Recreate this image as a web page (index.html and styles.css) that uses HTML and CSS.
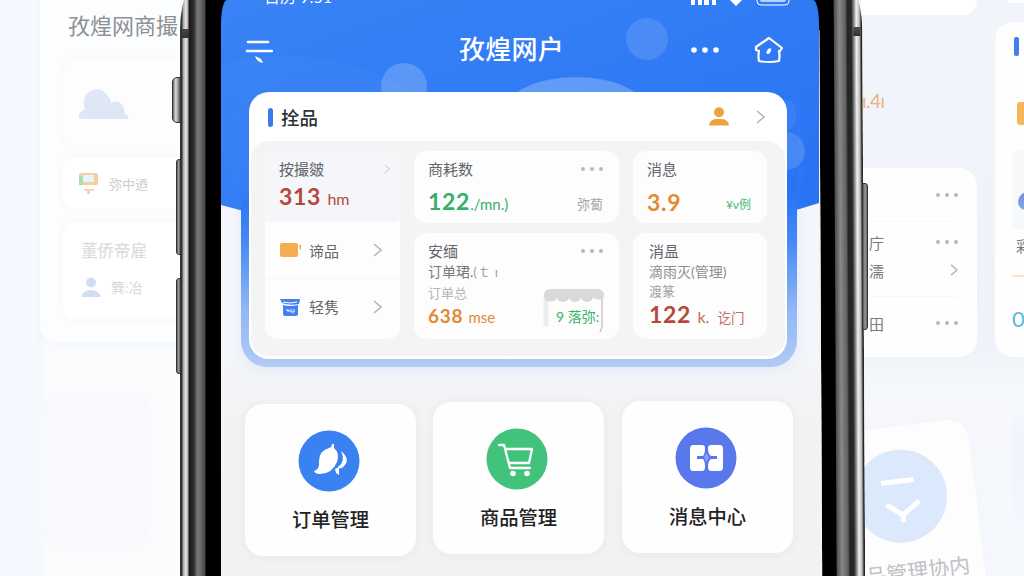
FILE: index.html
```
<!DOCTYPE html>
<html lang="zh-CN">

<head>
    <meta charset="UTF-8">
    <meta name="viewport" content="width=device-width, initial-scale=1.0">
    <title>孜煌网户</title>
    <link rel="stylesheet" href="styles.css">
</head>

<body>
    <div class="scene">
        <!-- 左侧背景 -->
        <div class="side-left">
            <div class="ghost-panel">
                <h2 class="ghost-title">孜煌网商撮</h2>
                <div class="ghost-card cloud-card">
                    <svg width="52" height="32" viewBox="0 0 52 32"><path d="M2 31Q-2 26 7 21Q3 9 12 3Q23-2 29 7Q33 11 33 15Q40 11 45 18Q47 22 46 25Q50 27 51 31Z" fill="#dfe7f5"/></svg>
                </div>
                <div class="ghost-card ghost-row">
                    <svg width="22" height="22" viewBox="0 0 22 22"><rect x="1" y="1" width="19" height="12" rx="2" fill="#f6cfa0"/><rect x="1" y="4" width="4" height="9" fill="#a8dfae"/><rect x="5" y="3" width="11" height="7" fill="#e4f5fb"/><path d="M6 17h10v2h-4v3H9v-3H6z" fill="#f3d1b4"/></svg>
                    <span>弥中迺</span>
                </div>
                <div class="ghost-card ghost-user">
                    <p>董侨帝雇</p>
                    <div class="ghost-row">
                        <svg width="20" height="20" viewBox="0 0 20 20" fill="#cfdef6"><circle cx="10" cy="5.500" r="5"/><path d="M0 20Q2 13 10 13T20 20Z"/></svg>
                        <span>簨:冶</span>
                    </div>
                </div>
            </div>
            <div class="ghost-block"></div>
        </div>

        <!-- 手机 -->
        <div class="phone">
            <div class="rail rail-left"></div>
            <div class="screen">
                <svg class="hero" width="598" height="214" viewBox="0 0 598 214">
                    <defs>
                        <linearGradient id="heroFill" x1="0" y1="0" x2="1" y2="1">
                            <stop offset="0" stop-color="#3983f6"/>
                            <stop offset="1" stop-color="#2872f4"/>
                        </linearGradient>
                    </defs>
                    <path d="M0 0H598V203L562 214H34L0 205Z" fill="url(#heroFill)"/>
                    <path d="M0 64Q90 40 180 86V214H0Z" fill="#fff" opacity=".025"/>
                    <circle cx="183" cy="86" r="23" fill="#fff" opacity=".2"/>
                    <circle cx="426" cy="39" r="21" fill="#fff" opacity=".12"/>
                    <ellipse cx="355" cy="113" rx="72" ry="36" fill="#fff" opacity=".24"/>
                    <rect x="540" y="100" width="35" height="30" rx="9" fill="#fff" opacity=".06"/>
                    <circle cx="565" cy="151" r="19" fill="#fff" opacity=".14"/>
                </svg>
                <div class="status-bar">
                    <span>日历 9:51</span>
                    <svg width="102" height="18" viewBox="0 0 102 18" fill="#fff"><path d="M2 10h4v7H2zm7-2h4v9H9zm6-3h5v12h-5zm8-3h4v15h-4zM40 11Q47 5 54 11L47 18Z"/><rect x="68" y="3" width="32" height="14" rx="4" fill="none" stroke="#fff"/><rect x="71" y="6" width="26" height="8" rx="2" opacity=".65"/></svg>
                </div>
                <div class="nav-bar">
                    <svg width="28" height="26" viewBox="0 0 28 26"><path d="M3 3h20M2 12h25" stroke="#fff" stroke-width="2.500" stroke-linecap="round"/><path d="M10 17L16 20L18 24Q12 23 10 17Z" fill="#fff"/></svg>
                    <h1>孜煌网户</h1>
                    <div class="nav-actions">
                        <svg width="28" height="8" viewBox="0 0 28 8" fill="#fff"><circle cx="3" cy="4" r="2.800"/><circle cx="14" cy="4" r="2.800"/><circle cx="25" cy="4" r="2.800"/></svg>
                        <svg width="30" height="28" viewBox="0 0 30 28" fill="none" stroke="#fff" stroke-width="2.200" stroke-linejoin="round"><path d="M15 2L28 12L26 15H25Q26 20 25 25Q15 27 5 25Q4 20 5 15L2 14V11Z"/><path d="M14 13Q18 11 17 15Q15 20 12 17Z" fill="#fff" stroke="none"/></svg>
                    </div>
                </div>

                <section class="summary">
                    <div class="summary-inner">
                        <header class="summary-head">
                            <i class="bar"></i>
                            <h2>拴品</h2>
                            <svg class="user" width="20" height="20" viewBox="0 0 20 20" fill="#f0a13f"><circle cx="10" cy="5.300" r="5"/><path d="M0 18.500Q1 12 7 12H13Q19 12 20 18.500Z"/></svg>
                            <svg class="arrow" width="9" height="14" viewBox="0 0 9 14"><path d="M1 1L8 7L1 13"/></svg>
                        </header>
                        <div class="summary-grid">
                            <div class="menu-card">
                                <div class="menu-top">
                                    <div class="line">
                                        <span class="label">按撮皴</span>
                                        <svg class="arrow faint" width="6" height="10" viewBox="0 0 9 14"><path d="M1 1L8 7L1 13"/></svg>
                                    </div>
                                    <p class="num red">313 <small>hm</small></p>
                                </div>
                                <div class="menu-item">
                                    <svg width="22" height="16" viewBox="0 0 22 16" fill="#f4ad50"><rect x="0" y="1" width="18" height="14" rx="2"/><path d="M19 3h2v5h-1z"/></svg>
                                    <span>谛品</span>
                                    <svg class="arrow" width="9" height="14" viewBox="0 0 9 14"><path d="M1 1L8 7L1 13"/></svg>
                                </div>
                                <div class="menu-item">
                                    <svg width="22" height="18" viewBox="0 0 22 18" fill="#4480ef"><path d="M0 1H20L19 6Q10 8 2 5Z"/><path d="M3 7Q10 9 18 7V16Q18 18 16 18H5Q3 18 3 16Z"/><path d="M3 4Q10 6 17 4M7 11v2l2-1v2m2-3v3h3v-3" fill="none" stroke="#fff" stroke-width="1"/></svg>
                                    <span>轻隽</span>
                                    <svg class="arrow" width="9" height="14" viewBox="0 0 9 14"><path d="M1 1L8 7L1 13"/></svg>
                                </div>
                            </div>
                            <div class="stat-card">
                                <div class="line">
                                    <span class="label">商耗数</span>
                                    <span class="dots"><i></i><i></i><i></i></span>
                                </div>
                                <div class="line value-line">
                                    <p class="num green">122<small>./mn.)</small></p>
                                    <span class="tag">弥蔔</span>
                                </div>
                            </div>
                            <div class="stat-card">
                                <div class="line"><span class="label">消息</span></div>
                                <div class="line value-line">
                                    <p class="num orange">3.9</p>
                                    <span class="tag green">¥ν例</span>
                                </div>
                            </div>
                            <div class="stat-card order-card">
                                <div class="line">
                                    <span class="label">安缅</span>
                                    <span class="dots"><i></i><i></i><i></i></span>
                                </div>
                                <p class="sub">订单珺.<em>(ｔ ı</em></p>
                                <p class="hint">订单总</p>
                                <p class="num orange small">638 <small>mse</small></p>
                                <div class="shop">
                                    <svg width="62" height="46" viewBox="0 0 62 46"><path d="M3 9V38" stroke="#eeeeef" stroke-width="5"/><path d="M59 9V39l-2 5" fill="none" stroke="#c9c5d2" stroke-width="1.500"/><path d="M1 6Q2 1 8 1H54Q60 1 61 6V8A6 5 0 0 1 50 9A6 5 0 0 1 38 9A6 5 0 0 1 26 9A6 5 0 0 1 14 9A6.500 5 0 0 1 1 8Z" fill="#d8d9db"/></svg>
                                    <span>9 落弥:</span>
                                </div>
                            </div>
                            <div class="stat-card message-card">
                                <div class="line"><span class="label">消昷</span></div>
                                <p class="sub">滴雨灭(管理)</p>
                                <p class="hint">渡篆</p>
                                <p class="num red">122 <small>k. <b>讫门</b></small></p>
                            </div>
                        </div>
                    </div>
                </section>

                <nav class="tiles">
                    <a class="tile">
                        <svg width="62" height="62" viewBox="0 0 62 62"><circle cx="31" cy="31" r="30.500" fill="#3a82f2"/><path d="M16 41Q22 39 21 31Q21 21 31 18Q34 17 34 14L36 14L36 18Q42 23 39 32Q34 44 22 44Q17 44 16 41Z" fill="#fff"/><path d="M43 21Q54 30 44 38Q41 39 40 37Q48 31 43 21ZM37 39L41 37L41 45L38 43Z" fill="#fff"/></svg>
                        <span>订单管理</span>
                    </a>
                    <a class="tile">
                        <svg width="62" height="62" viewBox="0 0 62 62"><circle cx="31" cy="31" r="30.500" fill="#42c37c"/><path d="M13 17H18L24 40H44M20 21H46L43 35H23" fill="none" stroke="#fff" stroke-width="2.300" stroke-linecap="round" stroke-linejoin="round"/><circle cx="27" cy="45.500" r="2.800" fill="#fff"/><circle cx="41" cy="45.500" r="2.800" fill="#fff"/></svg>
                        <span>商品管理</span>
                    </a>
                    <a class="tile">
                        <svg width="62" height="62" viewBox="0 0 62 62"><circle cx="31" cy="31" r="30.500" fill="#5878ec"/><path d="M18 18H27Q30 18 30 21Q30 27 28 29H22V32H28Q30 34 30 40Q30 44 27 44H18Q15 44 15 40V22Q15 18 18 18Z" fill="#fff"/><path d="M36 18H45Q48 18 48 22V40Q48 44 45 44H36Q33 44 33 40Q33 34 36 32H42V29H36Q33 27 33 21Q33 18 36 18Z" fill="#fff"/><path d="M31.500 26L34 30.500L31.500 35L29 30.500Z" fill="#88a2fb"/></svg>
                        <span>消息中心</span>
                    </a>
                </nav>
            </div>
            <div class="rail rail-right"></div>
            <i class="key key-mute"></i>
            <i class="key key-up"></i>
            <i class="key key-down"></i>
            <i class="key key-power"></i>
        </div>

        <!-- 右侧背景 -->
        <div class="side-right">
            <div class="right-col">
                <div class="right-top"></div>
                <div class="right-number">ı.4ı</div>
                <div class="right-list">
                    <div class="right-item"><span></span><span class="dots"><i></i><i></i><i></i></span></div>
                    <div class="right-item tall">
                        <div class="line"><span>庁</span><span class="dots"><i></i><i></i><i></i></span></div>
                        <div class="line"><span>濡</span><svg class="arrow" width="8" height="12" viewBox="0 0 9 14"><path d="M1 1L8 7L1 13"/></svg></div>
                    </div>
                    <div class="right-item"><span>田</span><span class="dots"><i></i><i></i><i></i></span></div>
                </div>
                <div class="tilted">
                    <svg width="94" height="94" viewBox="0 0 94 94"><circle cx="47" cy="47" r="46.500" fill="#dce8fb"/><path d="M29 32H62M32 54L47 66L65 54M47 66V73" fill="none" stroke="#fff" stroke-width="5"/></svg>
                    <span>品管理协内</span>
                </div>
            </div>
            <div class="edge-col">
                <div class="edge-cap"></div>
                <div class="edge-card">
                    <i class="edge-bar"></i>
                    <i class="edge-box"></i>
                    <div class="edge-inner"><i></i></div>
                    <span>彩</span>
                    <i class="edge-line"></i>
                    <b>0</b>
                </div>
                <div class="edge-foot"></div>
            </div>
        </div>
    </div>
</body>

</html>
```
FILE: styles.css
```
* {
    box-sizing: border-box;
}

body {
    margin: 0;
    font-family: Lato, "Noto Sans CJK SC", sans-serif;
    background-color: #f7f9fc;
    overflow: hidden;
}

h1,
h2,
p {
    margin: 0;
    font-weight: normal;
}

svg {
    display: block;
    flex: none;
}

.scene {
    display: grid;
    grid-template-columns: 180px 682px 162px;
    width: 1024px;
    height: 576px;
    overflow: hidden;
}

.line {
    display: flex;
    justify-content: space-between;
    align-items: center;
}

.arrow {
    fill: none;
    stroke: #b2b5ba;
    stroke-width: 1.6;
}

.faint {
    stroke: #d5d7dc;
}

.dots {
    display: flex;
    gap: 5px;
}

.dots i {
    width: 4px;
    height: 4px;
    border-radius: 50%;
    background-color: #b6b8bc;
}

.red {
    color: #b7483a;
}

.green {
    color: #36af68;
}

.orange {
    color: #e28a34;
}

/* 左侧背景 */
.side-left {
    padding-left: 40px;
    background: linear-gradient(90deg, #f5f9ff 0, #f6f9fe 34px, #f4f7fb 38px, #f9fbfd 46px);
    overflow: hidden;
}

.ghost-panel {
    height: 342px;
    padding: 10px 0 0 23px;
    border-radius: 0 0 0 16px;
    background-color: #fcfdfe;
    box-shadow: 0 3px 8px #f4f6f9;
}

.ghost-title {
    width: 150px;
    margin-left: 5px;
    font-size: 22px;
    line-height: 32px;
    color: #8d9095;
}

.ghost-card {
    border-radius: 12px 0 0 12px;
    background-color: #fff;
    box-shadow: 0 0 7px #f4f6f9;
}

.cloud-card {
    height: 87px;
    margin-top: 16px;
    padding: 30px 0 0 15px;
    background-color: #fdfdfe;
}

.ghost-row {
    display: flex;
    align-items: center;
    gap: 10px;
    font-size: 13px;
    color: #c9cbcf;
}

.ghost-card.ghost-row {
    height: 52px;
    margin-top: 12px;
    padding-left: 15px;
    gap: 9px;
}

.ghost-user {
    height: 97px;
    margin-top: 13px;
    padding: 18px 0 0 18px;
}

.ghost-user p {
    font-size: 16.5px;
    font-weight: 500;
    line-height: 22px;
    color: #dcdddf;
}

.ghost-user .ghost-row {
    margin-top: 15px;
    font-size: 14px;
    color: #d5d7da;
}

.ghost-block {
    height: 152px;
    margin: 51px 30px 0 0;
    border-radius: 18px;
    background-color: #f7f9fc;
}

/* 手机 */
.phone {
    position: relative;
    z-index: 2;
    display: flex;
    height: 606px;
    margin-top: -30px;
}

.rail {
    flex: none;
    height: 606px;
}

.rail-left {
    width: 41px;
    border-radius: 30px 0 0 0 / 60px 0 0 0;
    background: linear-gradient(180deg, transparent 59px, #474747 59px, #303030 68px, transparent 68px) 2px 0 / 7px 100% no-repeat, linear-gradient(90deg, #343434 0, #343434 2px, #a0a0a0 3px, #e8e8e8 6px, #aaa 8px, #171717 9px, #33312f 14px, #444 15px, #777 17px, #6d6d6d 20px, #454545 25px, #000 26px, #000 41px);
}

.rail-right {
    width: 43px;
    border-radius: 0 30px 0 0 / 0 60px 0 0;
    background: linear-gradient(180deg, transparent 57px, #505050 57px, #303030 66px, transparent 66px) 34px 0 / 7px 100% no-repeat, linear-gradient(90deg, #000 0, #000 14px, #4f4f4f 15px, #888 20px, #606060 26px, #242424 28px, #282828 32px, #737373 34px, #f0f0f0 37px, #bcbcbc 40px, #242424 42px, #2d2d2d 43px);
    transform: skewX(.3deg);
    transform-origin: top;
}

.screen {
    position: relative;
    width: 598px;
    padding-top: 30px;
    background: linear-gradient(180deg, #f4f6fb 380px, #f3f3f4 440px, #f2f2f3);
    box-shadow: 3px 0 #f3f3f4;
}

.screen::before {
    content: "";
    position: absolute;
    inset: 0 -4px auto 0;
    height: 60px;
    background-color: #000;
}

.rail-right {
    position: relative;
}

.hero {
    position: absolute;
    left: 0;
    top: 30px;
    border-radius: 6px 6px 0 0 / 24px 24px 0 0;
}

/* 状态栏被屏幕上缘截断 */
.status-bar {
    position: relative;
    display: flex;
    justify-content: space-between;
    height: 18px;
    margin: -12px 28px 0 43px;
    font-size: 16px;
    line-height: 18px;
    color: #fff;
}

.nav-bar {
    position: relative;
    display: grid;
    grid-template-columns: 120px 1fr 120px;
    align-items: center;
    height: 48px;
    margin: 20px 35px 0 24px;
}

.nav-bar > svg {
    margin-top: 3px;
}

.nav-bar h1 {
    margin-left: -6px;
    margin-top: -2px;
    font-size: 26px;
    font-weight: 500;
    line-height: 44px;
    text-align: center;
    letter-spacing: .3px;
    color: #fff;
}

.nav-actions {
    display: flex;
    justify-content: flex-end;
    align-items: center;
    gap: 35px;
}

.summary {
    position: relative;
    width: 556px;
    height: 283px;
    margin: 10px 0 0 20px;
    padding: 8px 10px 8px 8px;
    border-radius: 26px;
    background: linear-gradient(180deg, transparent 38%, #2f7af4 43%, #4488f5 55%, #91b7f6 80%, #b2cbf3 100%);
    box-shadow: 0 4px 14px rgba(120, 165, 235, .13);
}

.summary-inner {
    height: 267px;
    border-radius: 20px;
    background-color: #fff;
    overflow: hidden;
}

.summary-head {
    display: flex;
    align-items: center;
    height: 49px;
    padding: 1px 22px 0 19px;
}

.bar {
    width: 5px;
    height: 19px;
    border-radius: 3px;
    background-color: #397bec;
}

.summary-head h2 {
    margin: 0 auto 0 8px;
    font-size: 18.5px;
    font-weight: 500;
    color: #303236;
}

.summary-head .user {
    margin-right: 27px;
}

.summary-grid {
    display: grid;
    grid-template-columns: 135px 205px 134px;
    grid-template-rows: 72px 106px;
    gap: 10px 14px;
    height: 215px;
    margin: 0 2px;
    padding: 10px 17px 0 14px;
    border-radius: 18px;
    background-color: #f4f4f5;
}

.menu-card {
    grid-row: span 2;
    border-radius: 12px;
    background-color: #fdfdfd;
    overflow: hidden;
}

.menu-top {
    height: 71px;
    padding: 7px 10px 0 14px;
    border-radius: 12px 12px 5px 5px;
    background-color: #f4f6f9;
}

.label {
    font-size: 15px;
    line-height: 22px;
    color: #62656b;
}

.num {
    font-size: 23px;
    font-weight: bold;
    line-height: 32px;
    letter-spacing: .7px;
    white-space: nowrap;
}

.num small {
    font-size: 16px;
    font-weight: normal;
    letter-spacing: 0;
}

.menu-item {
    display: flex;
    align-items: center;
    height: 56px;
    padding: 0 18px 0 15px;
    font-size: 15px;
    color: #64676c;
}

.menu-item + .menu-item {
    border-top: 1px solid #f7f7f7;
}

.menu-item span {
    margin: 0 auto 0 7px;
}

.stat-card {
    padding: 7px 16px 0 14px;
    border-radius: 13px;
    background-color: #fdfdfd;
}

.value-line {
    height: 42px;
}

.value-line .num {
    font-size: 23px;
    padding-top: 2px;
}

.value-line small {
    font-size: 15px;
}

.tag {
    padding-top: 4px;
    font-size: 13px;
    color: #a0a2a5;
}

.tag.green {
    font-size: 12px;
    color: #43b96f;
}

.sub {
    font-size: 14px;
    line-height: 20px;
    white-space: nowrap;
    color: #75787d;
}

.sub em {
    font-style: normal;
    color: #a4a6aa;
}

.hint {
    font-size: 13px;
    line-height: 22px;
    color: #b5b7ba;
}

.order-card {
    position: relative;
}

.order-card .num {
    font-size: 19px;
    line-height: 24px;
}

.order-card .num small {
    font-size: 15px;
}

/* 店铺小图叠在卡片右下角 */
.shop {
    position: absolute;
    right: 14px;
    bottom: 5px;
    display: grid;
}

.shop svg,
.shop span {
    grid-area: 1 / 1;
}

.shop span {
    padding: 17px 0 0 13px;
    font-size: 14px;
    line-height: 24px;
    white-space: nowrap;
    color: #36b568;
}

.message-card {
    padding-left: 16px;
    padding-right: 0;
}

.message-card .sub {
    color: #8c8f94;
}

.message-card .hint {
    line-height: 18px;
    color: #9d9fa3;
}

.message-card .num {
    line-height: 28px;
}

.message-card small {
    font-size: 16px;
    color: #c56b48;
}

.message-card b {
    margin-left: 4px;
    font-size: 13.5px;
    font-weight: normal;
    color: #c86b62;
}

.tiles {
    display: flex;
    gap: 18px;
    margin: 34px 0 0 24px;
}

.tile {
    display: flex;
    flex-direction: column;
    align-items: center;
    width: 171px;
    height: 152px;
    margin-top: 3px;
    padding-top: 26px;
    border-radius: 18px;
    background-color: #fefefe;
    box-shadow: 0 1px 10px rgba(60, 60, 70, .055);
    font-size: 19.3px;
    font-weight: 500;
    line-height: 28px;
    color: #222;
}

.tile svg {
    margin-right: 4px;
}

.tile:nth-child(2) {
    margin-top: 1px;
    margin-left: -1px;
}

.tile:nth-child(3) {
    margin-top: 0;
}

.tile span {
    margin-top: 14px;
}

/* 机身侧键 */
.key {
    position: absolute;
    width: 5px;
    border: 1px solid #333;
    border-radius: 3px 0 0 3px;
    background: linear-gradient(90deg, #555, #999, #666);
}

.key-mute {
    left: -8px;
    top: 107px;
    width: 9px;
    height: 46px;
    border-radius: 5px 0 0 5px;
    background: linear-gradient(90deg, #666, #ddd 40%, #555);
}

.key-up {
    left: -4px;
    top: 189px;
    height: 96px;
}

.key-down {
    left: -4px;
    top: 308px;
    height: 96px;
}

.key-power {
    left: 682px;
    top: 213px;
    width: 6px;
    height: 147px;
    border-radius: 0 3px 3px 0;
}

/* 右侧背景 */
.side-right {
    display: grid;
    grid-template-columns: 115px 29px;
    justify-content: space-between;
    height: 576px;
    background: linear-gradient(180deg, #f1f5fb 0, #eff3f9 350px, #f6f8fc 390px, #f5f8fd 100%);
}

.right-top {
    height: 15px;
    border-radius: 0 0 14px 0;
    background-color: #fff;
}

.right-number {
    height: 153px;
    padding: 74px 0 0 0;
    font-size: 19px;
    line-height: 24px;
    letter-spacing: -.5px;
    color: #efb27a;
}

.right-list {
    height: 189px;
    padding: 0 19px 0 7px;
    border-radius: 0 18px 18px 0;
    background-color: #fefefe;
    font-size: 15px;
    color: #777a7f;
}

.right-item {
    display: flex;
    justify-content: space-between;
    align-items: center;
    height: 54px;
    border-bottom: 1px solid #f8f8f9;
}

.right-item:last-child {
    height: 52px;
    border: 0;
}

.right-item.tall {
    display: block;
    height: 75px;
    padding-top: 6px;
}

.tall .line {
    height: 28px;
}

.tilted {
    display: flex;
    flex-direction: column;
    align-items: center;
    width: 150px;
    height: 180px;
    margin: 69px 0 0 -34px;
    padding: 23px 0 0 0;
    border-radius: 20px;
    background-color: #fdfdfe;
    box-shadow: 0 0 10px #f1f3f7;
    font-size: 21px;
    line-height: 30px;
    white-space: nowrap;
    color: #bfc1c5;
    transform: rotate(-7deg);
}

.tilted span {
    margin: 14px 0 0 16px;
}

.edge-cap {
    height: 3px;
    margin-left: 13px;
    background-color: #fff;
}

.edge-card {
    height: 335px;
    margin-top: 19px;
    padding: 15px 0 0 17px;
    border-radius: 18px 0 0 18px;
    background-color: #fefefe;
    overflow: hidden;
    font-size: 15px;
    line-height: 22px;
}

.edge-card i {
    display: block;
}

.edge-bar {
    width: 5px;
    height: 19px;
    margin-left: 2px;
    border-radius: 2px;
    background-color: #4180ec;
}

.edge-box {
    height: 23px;
    margin: 46px 0 0 5px;
    border-radius: 3px 0 0 3px;
    background-color: #f5b75e;
}

.edge-inner {
    height: 79px;
    margin-top: 25px;
    padding: 42px 0 0 6px;
    border-radius: 8px 0 0 0;
    background-color: #f7f8fa;
}

.edge-inner i {
    width: 12px;
    height: 18px;
    border-radius: 10px 0 0 8px;
    background: linear-gradient(#8b83cf, #76adf4);
}

.edge-card span {
    display: block;
    margin: 6px 0 0 4px;
    color: #777;
}

.edge-line {
    height: 2px;
    margin-top: 18px;
    background-color: #fae3c3;
}

.edge-card b {
    display: block;
    margin-top: 31px;
    font-size: 22px;
    font-weight: normal;
    color: #5cb7e8;
}

.edge-foot {
    height: 220px;
    margin: 50px 0 0 17px;
    background: linear-gradient(180deg, #f5f8fd, #eff5fe 40px, #f5f8fd 130px);
}
```
